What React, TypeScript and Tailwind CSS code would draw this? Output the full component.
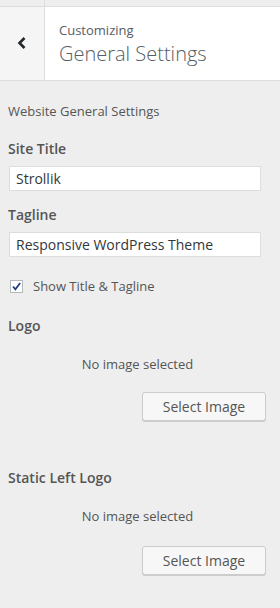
export default function App() {
  const font = { fontFamily: '"Open Sans", "Noto Sans", sans-serif' };
  return (
    <div className="w-[280px] h-[608px] bg-[#eeeeee] overflow-hidden text-[#555d66]" style={font}>
      <div className="h-[7px] flex border-b border-[#dddddd]">
        <div className="w-[45px] border-r border-[#dddddd]" />
        <div className="flex-1" />
      </div>
      <div className="h-[74px] flex border-b border-[#dddddd]">
        <div className="w-[45px] bg-[#f5f5f5] border-r border-[#dddddd] flex items-center justify-center">
          <svg width="12" height="14" viewBox="0 0 12 14" className="ml-[-1px] mt-[-2px]">
            <path d="M8.5 2 L3.5 7 L8.5 12" fill="none" stroke="#23282d" strokeWidth="2.6" />
          </svg>
        </div>
        <div className="flex-1 bg-white pl-[14px] pt-[14px]">
          <div className="text-[13px] leading-[18px] text-[#555d66]">Customizing</div>
          <div className="text-[20px] leading-[28px] font-light text-[#555d66] mt-[1px]">General Settings</div>
        </div>
      </div>
      <div className="px-[8px]">
        <div className="text-[13px] leading-[18px] mt-[21px] text-[#555]">Website General Settings</div>
        <div className="text-[14px] leading-[20px] font-semibold mt-[19px] text-[#555]">Site Title</div>
        <div className="mt-[7px] ml-[1px] w-[252px] h-[25px] bg-white border border-[#dddddd] px-[6px] flex items-center text-[14px] text-[#32373c]">Strollik</div>
        <div className="text-[14px] leading-[20px] font-semibold mt-[14px] text-[#555]">Tagline</div>
        <div className="mt-[7px] ml-[1px] w-[252px] h-[25px] bg-white border border-[#dddddd] px-[6px] flex items-center text-[14px] text-[#32373c]">Responsive WordPress Theme</div>
        <div className="mt-[20px] flex items-center ml-[2px]">
          <div className="w-[13px] h-[13px] bg-white border border-[#b4b9be] flex items-center justify-center">
            <svg width="11" height="11" viewBox="0 0 10 10">
              <path d="M1.8 5 L4 7.5 L8.3 1.8" fill="none" stroke="#1e3a8a" strokeWidth="1.6" />
            </svg>
          </div>
          <span className="ml-[10px] text-[13px] leading-[18px] text-[#555]">Show Title &amp; Tagline</span>
        </div>
        <div className="text-[14px] leading-[20px] font-semibold mt-[21px] text-[#555]">Logo</div>
        <div className="text-center text-[13px] leading-[18px] mt-[19px] text-[#555] pr-[5px]">No image selected</div>
        <div className="flex justify-end mt-[19px] pr-[6px]">
          <div className="w-[124px] h-[29px] bg-[#f7f7f7] border border-[#cccccc] rounded-[3px] shadow-[0_1px_0_#cccccc] flex items-center justify-center text-[14px] text-[#555]">Select Image</div>
        </div>
        <div className="text-[14px] leading-[20px] font-semibold mt-[47px] text-[#555]">Static Left Logo</div>
        <div className="text-center text-[13px] leading-[18px] mt-[19px] text-[#555] pr-[5px]">No image selected</div>
        <div className="flex justify-end mt-[21px] pr-[6px]">
          <div className="w-[124px] h-[29px] bg-[#f7f7f7] border border-[#cccccc] rounded-[3px] shadow-[0_1px_0_#cccccc] flex items-center justify-center text-[14px] text-[#555]">Select Image</div>
        </div>
      </div>
    </div>
  );
}
